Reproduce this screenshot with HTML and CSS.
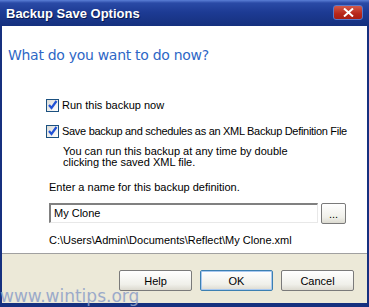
FILE: index.html
```html
<!DOCTYPE html>
<html lang="en">

<head>
    <meta charset="UTF-8">
    <meta name="viewport" content="width=device-width, initial-scale=1.0">
    <title>Backup Save Options</title>
    <link rel="stylesheet" href="styles.css">
</head>

<body>
    <div class="window">
        <div class="titlebar">
            <span class="title">Backup Save Options</span>
            <button class="close-btn" aria-label="Close">
                <svg width="11" height="9" viewBox="0 0 11 9">
                    <path d="M1 0.5 L10 8.5 M10 0.5 L1 8.5" stroke="#fff" stroke-width="2" />
                </svg>
            </button>
        </div>

        <div class="content">
            <h1 class="question">What do you want to do now?</h1>

            <div class="options">
                <label class="option">
                    <span class="checkbox"><svg width="11" height="11" viewBox="0 0 11 11">
                            <path d="M2 5 L4.5 8 L9.5 1" stroke="#2152d6" stroke-width="2.2" fill="none" />
                        </svg></span>
                    Run this backup now
                </label>
                <label class="option option-save">
                    <span class="checkbox"><svg width="11" height="11" viewBox="0 0 11 11">
                            <path d="M2 5 L4.5 8 L9.5 1" stroke="#2152d6" stroke-width="2.2" fill="none" />
                        </svg></span>
                    <span class="tight">Save backup and schedules as an XML Backup Definition File</span>
                </label>
                <p class="hint">You can run this backup at any time by double<br>clicking the saved XML file.</p>
            </div>

            <div class="name-group">
                <div class="name-label">Enter a name for this backup definition.</div>
                <div class="name-row">
                    <div class="name-input">My Clone</div>
                    <button class="xp-btn browse-btn">...</button>
                </div>
                <div class="path">C:\Users\Admin\Documents\Reflect\My Clone.xml</div>
            </div>
        </div>

        <div class="footer">
            <div class="buttons">
                <button class="xp-btn">Help</button>
                <button class="xp-btn default">OK</button>
                <button class="xp-btn">Cancel</button>
            </div>
            <div class="watermark">www.wintips.org</div>
        </div>
    </div>
</body>

</html>
```

FILE: styles.css
```css
body {
    margin: 0;
    font-family: "Liberation Sans", Arial, sans-serif;
    font-size: 11px;
    color: #000;
    background: #fff;
}

.window {
    width: 369px;
    height: 307px;
    display: flex;
    flex-direction: column;
    box-sizing: border-box;
    background: #16307f;
    padding: 0 2px 4px 2px;
}

.titlebar {
    height: 26px;
    margin: 0 -2px;
    padding: 0 6px 0 6px;
    display: flex;
    align-items: center;
    justify-content: space-between;
    background: linear-gradient(#5b7fd6 0px, #2a4aa6 3px, #1d3b94 12px, #15307e 26px);
}

.title {
    color: #fff;
    font-family: "Liberation Sans", Arial, sans-serif;
    font-weight: bold;
    font-size: 13px;
    text-shadow: 1px 1px 0 #0a1a50;
    padding-top: 1px;
}

.close-btn {
    width: 30px;
    height: 15px;
    padding: 0;
    margin-top: -1px;
    border: 1px solid #5a78c8;
    border-radius: 3px;
    background: linear-gradient(#d25a4a, #b8271a 60%, #a81e14);
    display: flex;
    align-items: center;
    justify-content: center;
}

.content {
    flex: 1;
    background: #fff;
    padding: 22px 0 0 6px;
    border-bottom: 1px solid #a0a0a0;
}

.question {
    margin: 0;
    font-family: "DejaVu Sans", sans-serif;
    font-weight: normal;
    font-size: 14px;
    line-height: 14px;
    color: #2e67c6;
    letter-spacing: -0.3px;
}

.options {
    padding: 36px 0 0 38px;
}

.option {
    display: flex;
    align-items: center;
    gap: 3px;
    height: 14px;
    white-space: nowrap;
}

.option-save {
    margin-top: 12px;
}

.tight {
    letter-spacing: -0.3px;
}

.checkbox {
    width: 11px;
    height: 11px;
    border: 1px solid #1c5180;
    background: linear-gradient(135deg, #dcdcd7, #fff);
    display: flex;
}

.hint {
    margin: 8px 0 0 17px;
    line-height: 11px;
}

.name-group {
    padding: 13px 0 0 41px;
}

.name-row {
    display: flex;
    gap: 3px;
    margin-top: 10px;
}

.name-input {
    width: 263px;
    height: 15px;
    padding: 2px 0 0 3px;
    border-style: solid;
    border-color: #808080 #e8e8e8 #e8e8e8 #808080;
    border-width: 2px 1px 1px 2px;
    background: #fff;
}

.path {
    margin-top: 10px;
}

.xp-btn {
    font-family: "Liberation Sans", Arial, sans-serif;
    font-size: 11px;
    color: #000;
    width: 73px;
    height: 21px;
    padding: 0;
    border: 1px solid #7a7a7a;
    border-radius: 2px;
    background: linear-gradient(#ffffff, #f0f0ea 70%, #dcdad0);
}

.xp-btn.default {
    border-color: #3c7fb1;
    box-shadow: inset 0 0 0 1px #a8c8f0;
}

.browse-btn {
    width: 25px;
    height: 21px;
}

.footer {
    height: 49px;
    background: #ece9d8;
    position: relative;
}

.buttons {
    display: flex;
    justify-content: flex-end;
    gap: 8px;
    padding: 16px 13px 0 0;
}

.watermark {
    position: absolute;
    left: -2px;
    bottom: -3px;
    font-family: "DejaVu Sans", sans-serif;
    font-size: 17px;
    color: #8ea0c8;
    opacity: 0.85;
}
```
